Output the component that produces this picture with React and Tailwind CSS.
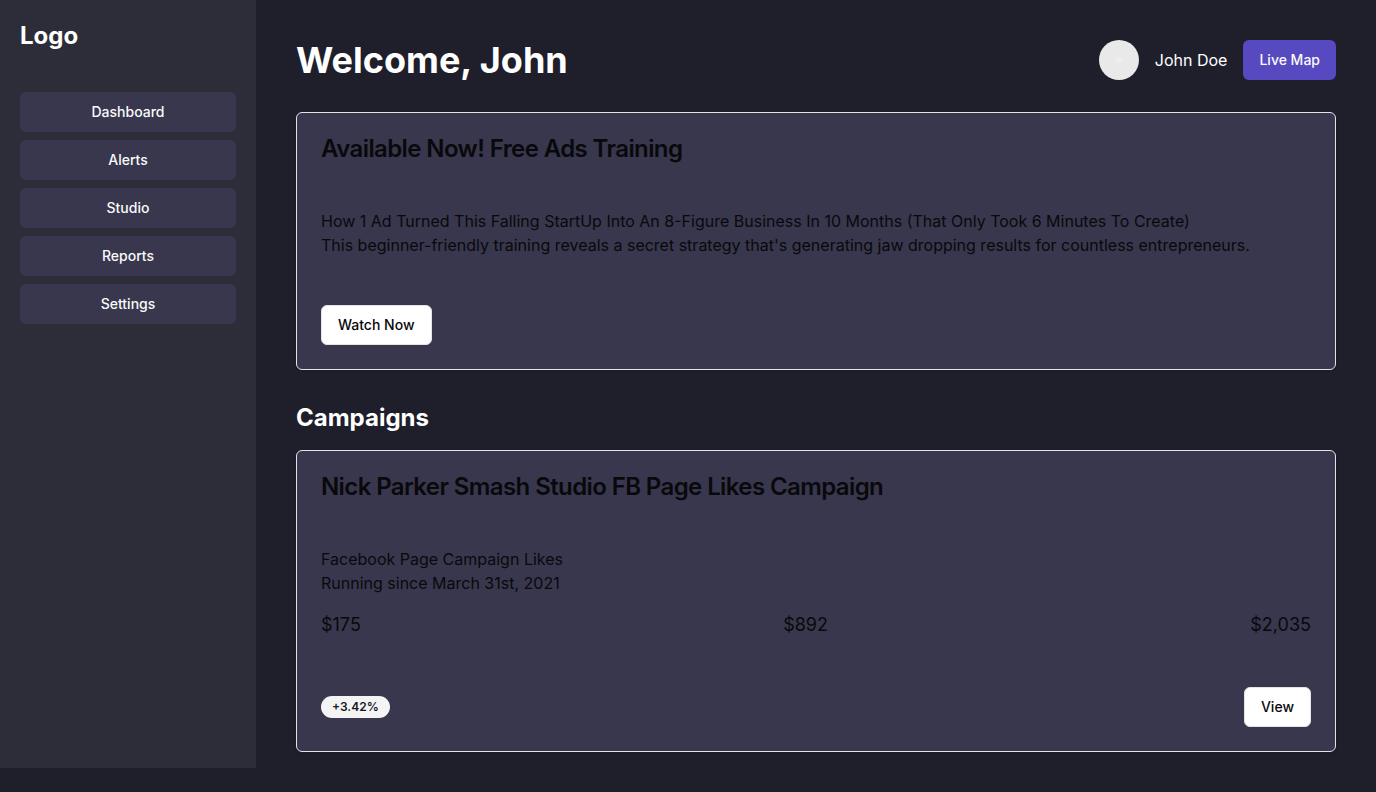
const NAV_ITEMS = ["Dashboard", "Alerts", "Studio", "Reports", "Settings"];
const AMOUNTS = ["$175", "$892", "$2,035"];

function Button({ children, className }) {
  return (
    <button
      type="button"
      className={`inline-flex h-10 items-center justify-center rounded-md px-4 text-sm font-medium whitespace-nowrap ${className}`}
    >
      {children}
    </button>
  );
}

function Card({ title, children, footer }) {
  return (
    <article className="rounded-md border border-[#e4e4e7] bg-[#38374e] text-[#09090b] shadow-sm">
      <div className="p-6">
        <h3 className="text-2xl leading-none font-semibold tracking-tight">{title}</h3>
      </div>
      <div className="p-6">{children}</div>
      <div className="flex items-center justify-between p-6">{footer}</div>
    </article>
  );
}

function Avatar() {
  return (
    <svg viewBox="0 0 40 40" className="size-10 rounded-full" role="img" aria-label="John Doe">
      <rect width="40" height="40" fill="#e9e9e9" />
      <circle cx="20" cy="20" r="3" fill="#eeeeee" />
    </svg>
  );
}

export default function App() {
  return (
    <div className="flex min-h-screen bg-[#1f1e2b] font-['Inter',sans-serif] text-white">
      <aside className="mb-6 w-64 shrink-0 bg-[#2d2d39] p-5">
        <div className="mb-10 text-2xl font-bold">Logo</div>
        <nav className="flex flex-col gap-2">
          {NAV_ITEMS.map((item) => (
            <Button key={item} className="bg-[#38374e] text-[#fafafa]">
              {item}
            </Button>
          ))}
        </nav>
      </aside>
      <main className="min-w-0 flex-1 p-10">
        <header className="mb-8 flex items-center justify-between">
          <h1 className="text-4xl font-bold">Welcome, John</h1>
          <div className="flex items-center gap-4">
            <Avatar />
            <span>John Doe</span>
            <Button className="bg-[#5749c0] text-[#fafafa]">Live Map</Button>
          </div>
        </header>
        <section className="mb-8">
          <Card
            title="Available Now! Free Ads Training"
            footer={<Button className="border border-[#e4e4e7] bg-white">Watch Now</Button>}
          >
            <p>
              How 1 Ad Turned This Falling StartUp Into An 8-Figure Business In 10 Months (That Only
              Took 6 Minutes To Create)
            </p>
            <p>
              This beginner-friendly training reveals a secret strategy that's generating jaw
              dropping results for countless entrepreneurs.
            </p>
          </Card>
        </section>
        <section>
          <h2 className="mb-4 text-2xl font-bold">Campaigns</h2>
          <Card
            title="Nick Parker Smash Studio FB Page Likes Campaign"
            footer={
              <>
                <span className="rounded-full border border-transparent bg-[#f4f4f5] px-2.5 py-0.5 text-xs font-semibold text-[#18181b]">
                  +3.42%
                </span>
                <Button className="border border-[#e4e4e7] bg-white">View</Button>
              </>
            }
          >
            <p>Facebook Page Campaign Likes</p>
            <p>Running since March 31st, 2021</p>
            <div className="mt-4 flex justify-between text-lg">
              {AMOUNTS.map((amount) => (
                <span key={amount}>{amount}</span>
              ))}
            </div>
          </Card>
        </section>
      </main>
    </div>
  );
}
